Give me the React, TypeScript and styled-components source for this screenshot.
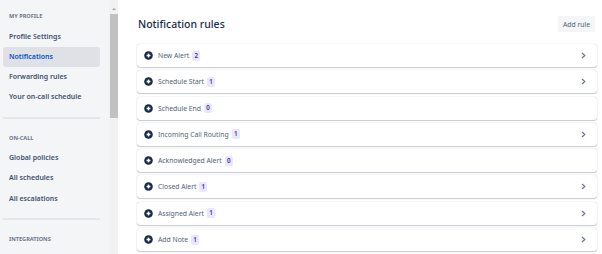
import React from "react";
import styled, { createGlobalStyle } from "styled-components";

const GlobalStyle = createGlobalStyle`
  html, body {
    margin: 0;
    padding: 0;
    background: #ffffff;
  }
  body {
    font-family: "Noto Sans", "Open Sans", sans-serif;
    color: #172b4d;
  }
`;

type Rule = {
  name: string;
  count: number;
  expandable: boolean;
};

const rules: Rule[] = [
  { name: "New Alert", count: 2, expandable: true },
  { name: "Schedule Start", count: 1, expandable: true },
  { name: "Schedule End", count: 0, expandable: false },
  { name: "Incoming Call Routing", count: 1, expandable: true },
  { name: "Acknowledged Alert", count: 0, expandable: false },
  { name: "Closed Alert", count: 1, expandable: true },
  { name: "Assigned Alert", count: 1, expandable: true },
  { name: "Add Note", count: 1, expandable: true },
];

const sections = [
  {
    title: "MY PROFILE",
    items: ["Profile Settings", "Notifications", "Forwarding rules", "Your on-call schedule"],
  },
  {
    title: "ON-CALL",
    items: ["Global policies", "All schedules", "All escalations"],
  },
  { title: "INTEGRATIONS", items: [] as string[] },
];

const Layout = styled.div`
  display: flex;
  height: 254px;
  overflow: hidden;
`;

const Sidebar = styled.aside`
  display: flex;
  flex: 0 0 118px;
  background: #f4f5f7;
`;

const Nav = styled.nav`
  width: 109px;
  padding-top: 6px;
  box-sizing: border-box;
`;

const SectionTitle = styled.div`
  height: 20.5px;
  line-height: 20.5px;
  padding-left: 9px;
  font-size: 5.6px;
  font-weight: 700;
  color: #6b778c;
`;

const NavItem = styled.div<{ $active?: boolean }>`
  height: 20.3px;
  line-height: 20.3px;
  margin: 0 9px 0 3px;
  padding-left: 6px;
  border-radius: 3px;
  font-size: 7px;
  font-weight: 600;
  color: ${(p) => (p.$active ? "#0052cc" : "#42526e")};
  background: ${(p) => (p.$active ? "#dfe1e6" : "transparent")};
  white-space: nowrap;
`;

const Divider = styled.div`
  height: 2px;
  margin: 9px 9px 9px 3px;
  background: #e4e6ea;
`;

const ScrollTrack = styled.div`
  display: flex;
  flex-direction: column;
  align-items: center;
  width: 9px;
  background: #f1f1f1;
`;

const ScrollArrow = styled.div`
  width: 0;
  height: 0;
  margin-top: 8px;
  border-left: 2px solid transparent;
  border-right: 2px solid transparent;
  border-bottom: 2px solid #a3a3a3;
`;

const ScrollThumb = styled.div`
  width: 8px;
  height: 104px;
  margin-top: 4px;
  background: #c1c1c1;
`;

const Main = styled.main`
  flex: 1;
  padding: 8px 5px 0 19px;
  min-width: 0;
`;

const Header = styled.div`
  display: flex;
  align-items: center;
  justify-content: space-between;
  height: 32px;
  margin-bottom: 4px;
`;

const Title = styled.h1`
  margin: 0 0 0 1px;
  font-size: 10.5px;
  font-weight: 500;
  color: #172b4d;
`;

const AddButton = styled.button`
  height: 16px;
  margin-right: 2px;
  padding: 0 5px;
  border: none;
  border-radius: 2px;
  background: #f4f5f7;
  font-family: inherit;
  font-size: 6.8px;
  color: #505f79;
`;

const RuleList = styled.div`
  display: flex;
  flex-direction: column;
  gap: 3.3px;
`;

const RuleCard = styled.div`
  display: flex;
  align-items: center;
  height: 23px;
  padding: 0 11px 0 7px;
  border-radius: 3px;
  background: #ffffff;
  box-shadow: 0 1px 1px rgba(9, 30, 66, 0.2), 0 0 1px rgba(9, 30, 66, 0.35);
  box-sizing: border-box;
`;

const RuleName = styled.span`
  margin-left: 5px;
  font-size: 6.8px;
  color: #505f79;
`;

const Badge = styled.span`
  display: inline-block;
  margin-left: 3px;
  padding: 0 2px;
  min-width: 4px;
  height: 10px;
  line-height: 10px;
  border-radius: 2px;
  background: #eae6ff;
  color: #403294;
  font-size: 6.2px;
  font-weight: 600;
  text-align: center;
`;

const Spacer = styled.div`
  flex: 1;
`;

function AddCircleIcon() {
  return (
    <svg width="9" height="9" viewBox="0 0 9 9">
      <circle cx="4.5" cy="4.5" r="4.3" fill="#172b4d" />
      <rect x="2.6" y="3.75" width="3.8" height="1.5" fill="#ffffff" />
      <rect x="3.75" y="2.6" width="1.5" height="3.8" fill="#ffffff" />
    </svg>
  );
}

function ChevronIcon() {
  return (
    <svg width="5" height="7" viewBox="0 0 5 7">
      <path d="M1 1 L3.8 3.5 L1 6" fill="none" stroke="#6b778c" strokeWidth="1.2" />
    </svg>
  );
}

function App() {
  return (
    <>
      <GlobalStyle />
      <Layout>
        <Sidebar>
          <Nav>
            {sections.map((section, i) => (
              <React.Fragment key={section.title}>
                {i > 0 && <Divider />}
                <SectionTitle>{section.title}</SectionTitle>
                {section.items.map((item) => (
                  <NavItem key={item} $active={item === "Notifications"}>
                    {item}
                  </NavItem>
                ))}
              </React.Fragment>
            ))}
          </Nav>
          <ScrollTrack>
            <ScrollArrow />
            <ScrollThumb />
          </ScrollTrack>
        </Sidebar>
        <Main>
          <Header>
            <Title>Notification rules</Title>
            <AddButton>Add rule</AddButton>
          </Header>
          <RuleList>
            {rules.map((rule) => (
              <RuleCard key={rule.name}>
                <AddCircleIcon />
                <RuleName>{rule.name}</RuleName>
                <Badge>{rule.count}</Badge>
                <Spacer />
                {rule.expandable && <ChevronIcon />}
              </RuleCard>
            ))}
          </RuleList>
        </Main>
      </Layout>
    </>
  );
}

export default App;
